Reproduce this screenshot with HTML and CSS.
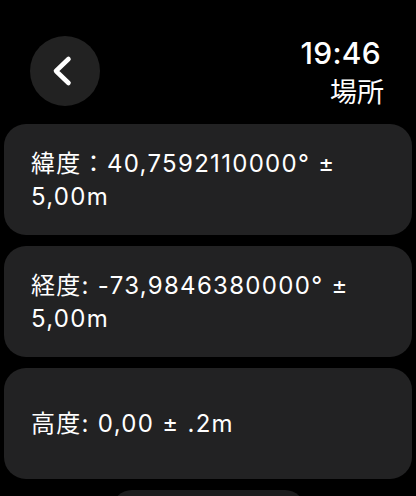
FILE: index.html
```html
<!DOCTYPE html>
<html lang="ja">
<head>
<meta charset="utf-8">
<link rel="stylesheet" href="styles.css">
</head>
<body>
<div class="screen">
  <header class="header">
    <button class="back" aria-label="戻る">
      <svg width="70" height="70" viewBox="0 0 70 70"><path d="M38.5 23 L26 35 L38.5 47" fill="none" stroke="#fff" stroke-width="4.6" stroke-linecap="round" stroke-linejoin="round"/></svg>
    </button>
    <div class="titles">
      <div class="time">19:46</div>
      <div class="title">場所</div>
    </div>
  </header>
  <div class="list">
    <div class="card"><p class="value">緯度：40,7592110000° ± 5,00m</p></div>
    <div class="card"><p class="value">経度: -73,9846380000° ± 5,00m</p></div>
    <div class="card"><p class="value">高度: 0,00 ± .2m</p></div>
    <div class="card small"></div>
  </div>
</div>
</body>
</html>
```

FILE: styles.css
```css
html, body {
  margin: 0;
  padding: 0;
  background: #000;
}
body {
  font-family: Inter, "Noto Sans CJK JP", sans-serif;
  color: #fff;
}
.screen {
  box-sizing: border-box;
  height: 496px;
  overflow: hidden;
  padding: 36px 4px 0;
}
.header {
  display: flex;
  justify-content: space-between;
  align-items: flex-start;
  padding: 0 30px 0 26px;
  height: 70px;
  margin-bottom: 18px;
}
.back {
  width: 70px;
  height: 70px;
  border-radius: 50%;
  background: #222222;
  border: 0;
  padding: 0;
  display: block;
}
.back svg { display: block; }
.titles {
  display: flex;
  flex-direction: column;
  align-items: flex-end;
}
.time {
  font-size: 30px;
  font-weight: 500;
  line-height: 30px;
  margin-top: 2px;
  margin-right: 1px;
  letter-spacing: 0.3px;
}
.title {
  font-size: 27px;
  line-height: 36px;
  margin-top: 7px;
  margin-right: -2px;
}
.list {
  display: flex;
  flex-direction: column;
  gap: 11px;
  align-items: center;
}
.card {
  align-self: stretch;
  height: 111px;
  flex-shrink: 0;
  border-radius: 22px;
  background: #222223;
  display: flex;
  align-items: center;
  padding: 0 40px 0 27px;
}
.card.small {
  align-self: center;
  width: 193px;
  height: 40px;
  padding: 0;
  background: #1c1c1d;
}
.value {
  margin: 0;
  font-size: 24px;
  line-height: 33px;
  letter-spacing: 1.3px;
}
```
